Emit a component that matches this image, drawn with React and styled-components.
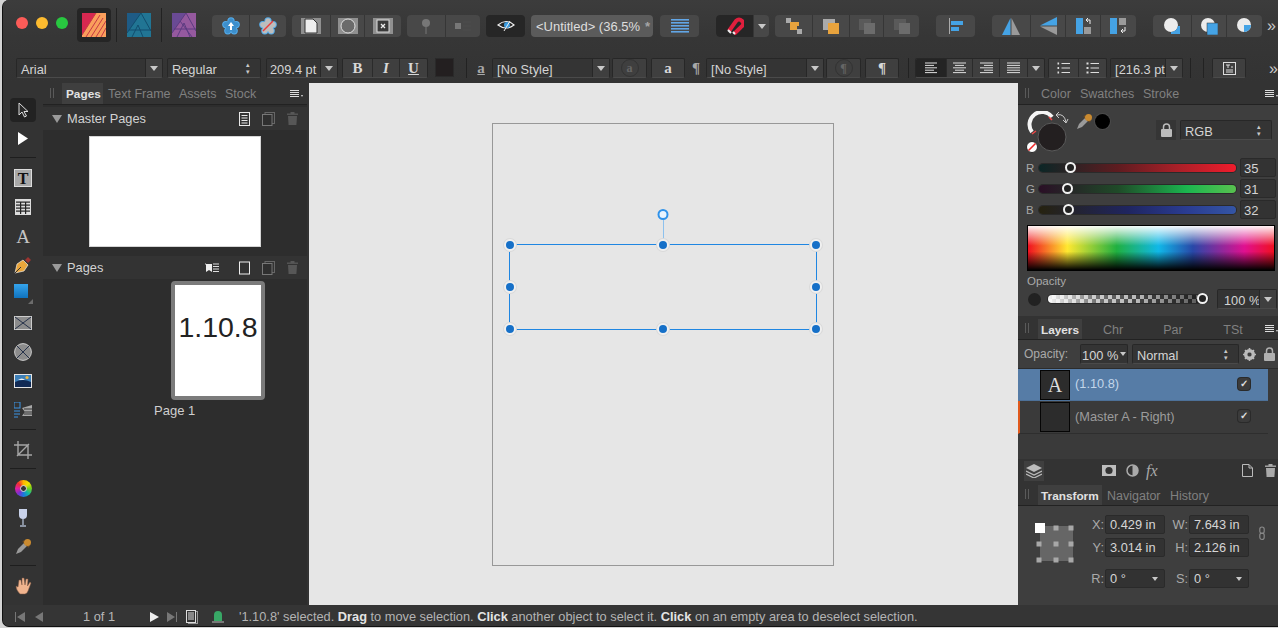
import React from 'react';
import styled, { createGlobalStyle } from 'styled-components';

const GlobalStyle = createGlobalStyle`
  html, body { margin: 0; padding: 0; background: #d4d4d4; overflow: hidden; }
  * { box-sizing: border-box; }
  body { font-family: "Liberation Sans", Arial, sans-serif; }
`;

const Window = styled.div`
  margin-left: 2px;
  width: 1276px;
  height: 627px;
  border-left: 1px solid #111;
  border-bottom: 1px solid #111;
  border-radius: 7px 0 0 7px;
  overflow: hidden;
  display: grid;
  grid-template-columns: 40px 266px 709px 260px;
  grid-template-rows: 83px 522px 21px;
  background: #333;
`;

const Toolbar = styled.div`
  grid-column: 1 / 5;
  background: linear-gradient(#3c3c3c, #363636 45%, #333);
`;

const TopRow = styled.div`
  display: flex;
  align-items: flex-start;
  height: 58px;
  padding-top: 15px;
`;

const FormatRow = styled.div`
  display: flex;
  align-items: flex-start;
  height: 25px;
`;

const Lights = styled.div`
  display: flex;
  gap: 8px;
  margin: 2px 0 0 13px;
`;

const Light = styled.span`
  width: 12px;
  height: 12px;
  border-radius: 50%;
  background: ${p => p.$c};
`;

const AppTile = styled.div`
  width: ${p => p.$active ? 34 : 24}px;
  height: 34px;
  margin: -7px 0 0 ${p => p.$ml}px;
  border-radius: 4px;
  background: ${p => p.$active ? '#252525' : 'transparent'};
  display: flex;
  align-items: center;
  justify-content: center;
`;

const AppSep = styled.span`
  width: 1px;
  height: 34px;
  margin: -7px 0 0 ${p => p.$ml}px;
  background: #222;
`;

const Group = styled.div`
  display: flex;
  height: 22px;
  margin-left: ${p => p.$ml}px;
  border-radius: 4px;
  overflow: hidden;
  background: ${p => p.$bg || '#484848'};
`;

const Seg = styled.div`
  width: ${p => p.$w}px;
  height: 100%;
  display: flex;
  align-items: center;
  justify-content: center;
  background: ${p => p.$bg || 'transparent'};
  & + & { border-left: 1px solid #363636; }
`;

const Title = styled.div`
  width: 122px;
  height: 22px;
  margin-left: 6px;
  padding-left: 5px;
  border-radius: 4px;
  background: #5b5b5b;
  color: #dedede;
  font-size: 13px;
  line-height: 24px;
  white-space: nowrap;
  overflow: hidden;
`;

const Star = styled.span`
  margin-left: 5px;
  color: #a5a5a5;
  font-weight: 700;
`;

const More = styled.span`
  margin-left: ${p => p.$ml}px;
  color: #c8c8c8;
  font-size: 16px;
  line-height: 22px;
`;

const Combo = styled.div`
  display: flex;
  flex: none;
  width: ${p => p.$w}px;
  height: 20px;
  margin-left: ${p => p.$ml}px;
  margin-top: ${p => p.$mt || 0}px;
  background: ${p => p.$bg || '#343434'};
  border: 1px solid #272727;
  border-bottom-color: #4a4a4a;
  border-radius: 2px;
  color: #d4d4d4;
  font-size: 12.8px;
  line-height: 21px;
`;

const ComboText = styled.span`
  flex: 1;
  padding-left: ${p => p.$pl || 4}px;
  white-space: nowrap;
  overflow: hidden;
`;

const ComboArrow = styled.span`
  flex: none;
  width: ${p => p.$w || 17}px;
  display: flex;
  align-items: center;
  justify-content: center;
  border-left: ${p => p.$bare ? 0 : '1px solid #272727'};
  background: ${p => p.$bare ? 'transparent' : '#3f3f3f'};
`;

const Caret = styled.i`
  width: 0;
  height: 0;
  border-left: ${p => p.$s || 4}px solid transparent;
  border-right: ${p => p.$s || 4}px solid transparent;
  border-top: ${p => (p.$s || 4) + 1}px solid #c8c8c8;
`;

const Stepper = styled.span`
  flex: none;
  width: 14px;
  color: #c8c8c8;
  font-size: 7px;
  line-height: 7px;
  padding-top: 2px;
`;

const FmtGroup = styled.div`
  display: flex;
  flex: none;
  height: 20px;
  margin-left: ${p => p.$ml}px;
  background: #3f3f3f;
  border: 1px solid #272727;
  border-bottom-color: #4a4a4a;
  border-radius: 2px;
  overflow: hidden;
`;

const FmtBtn = styled.div`
  width: ${p => p.$w}px;
  display: flex;
  align-items: center;
  justify-content: center;
  background: ${p => p.$on ? '#242424' : 'transparent'};
  color: ${p => p.$dim ? '#666' : '#d8d8d8'};
  font: 700 ${p => p.$fs || 15}px "Liberation Serif", serif;
  font-style: ${p => p.$i ? 'italic' : 'normal'};
  text-decoration: ${p => p.$u ? 'underline' : 'none'};
  & + & { border-left: 1px solid #2b2b2b; }
`;

const DimRing = styled.span`
  width: 18px;
  height: 18px;
  display: flex;
  align-items: center;
  justify-content: center;
  border-radius: 50%;
  border: 1px solid #333;
`;

const Swatch = styled.div`
  width: 34px;
  height: 19px;
  margin-left: ${p => p.$ml}px;
  background: #231f20;
  border: 1px solid #2a2a2a;
`;

const VSep = styled.span`
  flex: none;
  width: 1px;
  height: 20px;
  margin-left: ${p => p.$ml}px;
  background: #222;
`;

const Glyph = styled.span`
  flex: none;
  width: ${p => p.$w}px;
  margin-left: ${p => p.$ml}px;
  color: #a8a8a8;
  font: 700 15px/20px "Liberation Serif", serif;
  text-decoration: ${p => p.$u ? 'underline' : 'none'};
  text-align: center;
`;

const ToolColumn = styled.div`
  background: #333;
  padding-top: 15px;
  display: flex;
  flex-direction: column;
  align-items: center;
`;

const Tool = styled.div`
  width: 26px;
  height: ${p => p.$h || 29}px;
  margin-top: ${p => p.$mt || 0}px;
  display: flex;
  align-items: center;
  justify-content: center;
  border-radius: 4px;
  background: ${p => p.$on ? '#222' : 'transparent'};
`;

const ToolSep = styled.span`
  width: 26px;
  height: 1px;
  margin: ${p => p.$mt || 4}px 0 5px;
  background: #1e1e1e;
`;

const WheelDisc = styled.div`
  width: 17px;
  height: 17px;
  border-radius: 50%;
  background: conic-gradient(#ffb400, #f0e000, #6fd020, #10b8a0, #1c78e0, #7a30d0, #e020a0, #f03030, #ffb400);
  display: flex;
  align-items: center;
  justify-content: center;
`;

const WheelHub = styled.span`
  width: 7px;
  height: 7px;
  border-radius: 50%;
  background: #333;
  border: 1px solid #ddd;
`;

const Studio = styled.div`
  background: #2d2d2d;
  border-right: 2px solid #333;
  display: flex;
  flex-direction: column;
  overflow: hidden;
`;

const TabRow = styled.div`
  flex: none;
  display: flex;
  align-items: flex-end;
  height: ${p => p.$h || 22}px;
  background: #333;
  border-bottom: 1px solid #222;
  position: relative;
`;

const Grip = styled.span`
  width: 4px;
  height: 10px;
  margin: 0 0 6px ${p => p.$ml}px;
  border-left: 1px solid #5a5a5a;
  border-right: 1px solid #5a5a5a;
`;

const Tab = styled.div`
  width: ${p => p.$w}px;
  height: ${p => p.$h || 21}px;
  margin-left: ${p => p.$ml || 0}px;
  padding-left: ${p => p.$pl || 0}px;
  background: ${p => p.$on ? '#3f3f3f' : 'transparent'};
  color: ${p => p.$on ? '#e2e2e2' : '#808080'};
  font-size: ${p => p.$on ? 11.8 : 12.5}px;
  font-weight: ${p => p.$on ? 700 : 400};
  line-height: ${p => (p.$h || 21) + 2}px;
  text-align: ${p => p.$center ? 'center' : 'left'};
  white-space: nowrap;
`;

const TabMenu = styled.div`
  position: absolute;
  right: ${p => p.$r}px;
  bottom: 7px;
  width: 13px;
  height: 7px;
  &::before {
    content: "";
    display: block;
    width: 9px;
    height: 7px;
    background: repeating-linear-gradient(#ddd 0 1px, transparent 1px 2px);
  }
  &::after {
    content: "";
    position: absolute;
    right: 0;
    bottom: 0;
    border-left: 1.5px solid transparent;
    border-right: 1.5px solid transparent;
    border-top: 2px solid #ddd;
  }
`;

const SectionHead = styled.div`
  flex: none;
  display: flex;
  align-items: center;
  height: 23px;
  margin-top: ${p => p.$mt}px;
  background: #333;
  color: #d2d2d2;
  font-size: 12.8px;
`;

const Disclosure = styled.i`
  margin: 0 5px 0 9px;
  border-left: 5px solid transparent;
  border-right: 5px solid transparent;
  border-top: 8px solid #9a9a9a;
`;

const HeadIcons = styled.div`
  margin-left: auto;
  display: flex;
  align-items: center;
  gap: 12px;
  padding-right: 9px;
`;

const MasterThumb = styled.div`
  flex: none;
  width: 172px;
  height: 111px;
  margin: 6px 0 0 46px;
  background: #fff;
  border: 1px solid #d5d5d5;
`;

const PageThumb = styled.div`
  flex: none;
  width: 94px;
  height: 119px;
  margin: 2px 0 0 128px;
  padding-top: 25px;
  background: #fff;
  border: 4px solid #7b7b7b;
  border-radius: 4px;
  color: #222;
  font-size: 28.5px;
  line-height: 34px;
  text-align: center;
`;

const PageLabel = styled.div`
  margin: 3px 0 0 111px;
  color: #cfcfcf;
  font-size: 13px;
  line-height: 16px;
`;

const Canvas = styled.div`
  background: #e6e6e6;
  display: flex;
  justify-content: center;
  padding: 40px 1px 0 0;
`;

const Sheet = styled.div`
  width: 342px;
  height: 443px;
  border: 1px solid #989898;
  position: relative;
`;

const Selection = styled.div`
  position: absolute;
  left: 16px;
  top: 120px;
  width: 308px;
  height: 86px;
  border: 1px solid #1f86e2;
`;

const Stem = styled.span`
  position: absolute;
  left: 153px;
  top: -30px;
  width: 1px;
  height: 30px;
  background: #8dc1ee;
`;

const Handle = styled.span`
  position: absolute;
  left: ${p => p.$x}%;
  top: ${p => p.$y}%;
  width: 12px;
  height: 12px;
  transform: translate(-50%, -50%);
  border-radius: 50%;
  background: #1670c8;
  border: 2px solid #f0f0f0;
  box-shadow: 0 0 0 1px #dadada;
`;

const RotateHandle = styled.span`
  position: absolute;
  left: 50%;
  top: -36px;
  width: 11px;
  height: 11px;
  transform: translateX(-50%);
  border-radius: 50%;
  background: #e8f4ff;
  border: 2px solid #2f92ea;
`;

const Inspector = styled.div`
  background: #3e3e3e;
  display: flex;
  flex-direction: column;
  overflow: hidden;
`;

const ColorBody = styled.div`
  flex: none;
  height: 211px;
  padding-top: 6px;
`;

const ColorTop = styled.div`
  display: flex;
  align-items: flex-start;
  height: 47px;
  padding-left: 8px;
`;

const DropperSlot = styled.span`
  display: flex;
  margin-top: 2px;
`;

const BlackDot = styled.span`
  width: 15px;
  height: 15px;
  margin: 3px 0 0 2px;
  border-radius: 50%;
  background: #000;
  box-shadow: 0 0 0 1px #4a4a4a;
`;

const LockBox = styled.div`
  width: 20px;
  height: 20px;
  margin: 9px 0 0 46px;
  background: #353535;
  display: flex;
  align-items: center;
  justify-content: center;
`;

const SliderRow = styled.div`
  display: flex;
  align-items: center;
  height: 19px;
  margin-bottom: 2px;
  padding-left: 8px;
`;

const SliderLabel = styled.span`
  width: 13px;
  color: #a8a8a8;
  font-size: 11.5px;
`;

const Track = styled.div`
  width: ${p => p.$w || 197}px;
  height: 8px;
  margin-left: ${p => p.$ml || 0}px;
  border-radius: 4px;
  background: ${p => p.$bg};
  box-shadow: 0 0 0 1px #2a2a2a;
  position: relative;
`;

const Thumb = styled.span`
  position: absolute;
  left: ${p => p.$x}px;
  top: -2px;
  width: 11px;
  height: 11px;
  margin-left: -5px;
  border-radius: 50%;
  background: #222;
  border: 2px solid #f2f2f2;
`;

const ValueBox = styled.div`
  width: 36px;
  height: 19px;
  margin-left: 4px;
  padding-left: 3px;
  background: #333;
  border: 1px solid #2a2a2a;
  border-radius: 2px;
  color: #d4d4d4;
  font-size: 13px;
  line-height: 20px;
`;

const Spectrum = styled.div`
  width: 248px;
  height: 46px;
  margin: 6px 0 0 9px;
  border: 1px solid #000;
  background:
    linear-gradient(rgba(255,255,255,.95), rgba(255,255,255,0) 45%, rgba(0,0,0,0) 58%, #000),
    linear-gradient(90deg, #f01020, #ffe830 16%, #20b040 36%, #10b8e8 53%, #2848a8 67%, #e01090 88%, #f01020);
`;

const OpacityLabel = styled.div`
  margin: 4px 0 0 9px;
  color: #aaa;
  font-size: 11.5px;
  line-height: 13px;
`;

const OpacityRow = styled.div`
  display: flex;
  align-items: center;
  height: 20px;
  margin-top: 1px;
  padding-left: 10px;
`;

const Dot = styled.span`
  width: 13px;
  height: 13px;
  border-radius: 50%;
  background: #222;
`;

const LayerBar = styled.div`
  flex: none;
  display: flex;
  align-items: center;
  height: 29px;
  padding-left: 6px;
  border-bottom: 1px solid #2c2c2c;
  color: #aaa;
  font-size: 12px;
`;

const LayerList = styled.div`
  flex: none;
  height: 90px;
  background: #3a3a3a;
`;

const LayerRow = styled.div`
  display: flex;
  align-items: center;
  width: 250px;
  height: ${p => p.$h}px;
  padding-bottom: 2px;
  border-bottom: 1px solid ${p => p.$on ? '#4d7199' : '#2e2e2e'};
  border-left: 2px solid ${p => p.$mark ? '#e0591c' : 'transparent'};
  background: ${p => p.$on ? '#567ca6' : '#3a3a3a'};
  color: ${p => p.$on ? '#c3d6ea' : '#9c9c9c'};
  font-size: 12.8px;
`;

const LayerThumb = styled.div`
  width: 30px;
  height: 30px;
  margin: 2px 5px 0 20px;
  background: #2c2c2c;
  border: 1px solid #050505;
  color: #ddd;
  font: 20px/28px "Liberation Serif", serif;
  text-align: center;
`;

const LayerCheck = styled.span`
  width: 12px;
  height: 12px;
  margin: 0 18px 0 auto;
  background: #3b3b3b;
  border-radius: 3px;
  color: #ddd;
  font-size: 10px;
  font-weight: 700;
  line-height: 12px;
  text-align: center;
  box-shadow: 0 0 0 1px #2a2a2a;
`;

const LayerFoot = styled.div`
  flex: none;
  display: flex;
  align-items: center;
  height: 23px;
  background: #333;
`;

const LayersBtn = styled.div`
  width: 20px;
  height: 20px;
  margin-left: 6px;
  background: #3f3f3f;
  display: flex;
  align-items: center;
  justify-content: center;
`;

const FootSlot = styled.span`
  margin-left: ${p => p.$ml}px;
  display: flex;
  color: #aaa;
  font: italic 16px/16px "Liberation Serif", serif;
`;

const TransformBody = styled.div`
  flex: none;
  height: 99px;
  display: flex;
  align-items: flex-start;
`;

const AnchorIcon = styled.div`
  margin: 17px 0 0 17px;
`;

const FieldsWrap = styled.div`
  margin: 9px 0 0 13px;
`;

const Fields = styled.div`
  display: grid;
  grid-template-columns: 16px 60px 24px 60px;
  grid-auto-rows: 19px;
  row-gap: 4px;
  margin-bottom: 12px;
  align-items: center;
`;

const FieldLabel = styled.span`
  color: #aaa;
  font-size: 12.8px;
  text-align: right;
  padding-right: 1px;
`;

const Field = styled.div`
  height: 19px;
  padding-left: 4px;
  display: flex;
  align-items: center;
  justify-content: space-between;
  background: #323232;
  border-radius: 2px;
  border: 1px solid #2a2a2a;
  color: #d6d6d6;
  font-size: 12.8px;
`;

const FieldCaret = styled(Caret)`
  margin-right: 6px;
`;

const StatusBar = styled.div`
  grid-column: 1 / 5;
  display: flex;
  align-items: center;
  padding-top: 2px;
  background: #353535;
  color: #b4b4b4;
  font-size: 12.8px;
`;

const Slot = styled.span`
  display: flex;
  margin-left: ${p => p.$ml}px;
`;

const PageCount = styled.span`
  margin-left: 40px;
  width: 30px;
  color: #b8b8b8;
  white-space: nowrap;
`;

const Hint = styled.span`
  margin-left: 15px;
  white-space: nowrap;
  & b { color: #e4e4e4; }
`;

/* icons */
const Ico = ({ w = 16, h = 16, children }) => (
  <svg width={w} height={h} viewBox={`0 0 ${w} ${h}`} style={{ display: 'block' }}>{children}</svg>
);

const Publisher = () => (
  <Ico w={24} h={24}>
    <rect width="24" height="24" fill="#fa9f5c" />
    <path d="M0 0H14L0 22Z" fill="#d62850" />
    <path d="M0 22L14 0M4 24L18 2M9 24L21 5M14 24L24 8M19 24L24 15" stroke="#c63a45" strokeWidth="1" fill="none" />
  </Ico>
);

const Designer = () => (
  <Ico w={24} h={24}>
    <rect width="24" height="24" fill="#217594" />
    <path d="M0 0H14L0 20Z" fill="#1e5b85" />
    <path d="M0 20L14 0L24 18M5 24L11 12L16 24M2 17H24" stroke="#124d6e" strokeWidth="1" fill="none" />
  </Ico>
);

const Photo = () => (
  <Ico w={24} h={24}>
    <rect width="24" height="24" fill="#95599e" />
    <path d="M0 0H14L0 20Z" fill="#6a4a94" />
    <path d="M0 20L14 0L24 18M5 24L12 10L18 24M2 16H24M8 8L20 24" stroke="#5c3b80" strokeWidth="1" fill="none" />
  </Ico>
);

const petals = [[9, 3.8], [14.2, 7.6], [12.2, 13.8], [5.8, 13.8], [3.8, 7.6]];
const Flower = ({ fill, children }) => (
  <Ico w={18} h={18}>
    {petals.map(([x, y]) => <circle key={x + y} cx={x} cy={y} r="3.6" fill="#55adec" />)}
    {petals.map(([x, y]) => <circle key={x + y} cx={x} cy={y} r="2.6" fill={fill} />)}
    <circle cx="9" cy="9" r="5.6" fill={fill} />
    {children}
  </Ico>
);

const Stripes = ({ children }) => (
  <Ico w={20} h={16}>
    {[0, 2, 4, 6, 8, 10, 12, 14].map(y => <rect key={y} y={y + 0.5} width="20" height="1" fill="#d8d8d8" />)}
    {children}
  </Ico>
);

const Overlap = ({ back, front, dim }) => (
  <Ico w={18} h={16}>
    <rect x="1" y="1" width="12" height="11" fill={back} opacity={dim ? 0.55 : 1} />
    <rect x="6" y="5" width="11" height="11" fill={front} opacity={dim ? 0.55 : 1} />
  </Ico>
);

const Boolean = ({ children }) => (
  <Ico w={18} h={18}>
    <circle cx="8" cy="8" r="7" fill="#ececec" />
    {children}
  </Ico>
);

const Lines = ({ rows, color = '#ddd' }) => (
  <Ico w={13} h={12}>
    {rows.map(([x, w], i) => <rect key={i} x={x} y={i * 2.4 + 0.5} width={w} height="1" fill={color} />)}
  </Ico>
);

const Bullets = ({ nums }) => (
  <Ico w={13} h={12}>
    {[1.5, 6, 10.5].map(y => (
      <g key={y}>
        <rect x="0.5" y={y - 1} width={nums ? 2 : 1.6} height="2" fill="#ddd" />
        <rect x="4.5" y={y - 0.5} width="8.5" height="1" fill="#ddd" />
      </g>
    ))}
  </Ico>
);

const Dropper = () => (
  <Ico w={17} h={17}>
    <path d="M1 16L3 11L9 5L12 8L6 14Z" fill="#9a9a9a" />
    <path d="M8 3L14 9" stroke="#6a4a24" strokeWidth="2" />
    <circle cx="12.5" cy="4.5" r="3.5" fill="#c98a30" />
  </Ico>
);

const Trash = ({ color = '#575757' }) => (
  <Ico w={11} h={13}>
    <rect y="1.5" width="11" height="1.4" fill={color} />
    <rect x="3.5" width="4" height="2" fill={color} />
    <path d="M1 4H10L9.4 13H1.6Z" fill={color} />
  </Ico>
);

const DocLines = () => (
  <Ico w={11} h={14}>
    <rect x="0.5" y="0.5" width="10" height="13" fill="none" stroke="#e8e8e8" />
    {[3, 5.5, 8, 10.5].map(y => <rect key={y} x="2.5" y={y} width="6" height="1" fill="#e8e8e8" />)}
  </Ico>
);

const DocsDim = () => (
  <Ico w={13} h={14}>
    <rect x="3" y="0.5" width="9.5" height="11" fill="none" stroke="#666" />
    <rect x="0.5" y="2.5" width="9.5" height="11" fill="#2f2f2f" stroke="#777" />
  </Ico>
);

const Lock = ({ c = '#bbb' }) => (
  <Ico w={11} h={14}>
    <path d="M2.5 6V4A3 3 0 0 1 8.5 4V6" fill="none" stroke={c} strokeWidth="1.5" />
    <rect y="6" width="11" height="8" rx="1" fill={c} />
  </Ico>
);

const ColorChip = () => (
  <Ico w={50} h={46}>
    <path d="M6 21A12 12 0 0 1 26 6" fill="none" stroke="#f5f5f5" strokeWidth="4" />
    <path d="M6 23l4-3M23 6l3 3" stroke="#f04848" strokeWidth="1.5" />
    <circle cx="26" cy="26" r="14" fill="#231f20" stroke="#5a5a5a" />
    <path d="M31 4Q38 2 40 11M33 1l-3 3 3 3M37 9l3 3 2-4" fill="none" stroke="#ccc" strokeWidth="1" />
    <circle cx="6" cy="36" r="5.5" fill="#fff" stroke="#2a2a2a" />
    <path d="M2.5 39.5L9.5 32.5" stroke="#ee2a2a" strokeWidth="1.6" />
  </Ico>
);

const Anchor = () => (
  <Ico w={41} h={40}>
    <rect x="5" y="3" width="33" height="35" fill="#666" />
    {[[21, 5], [36, 5], [4, 21], [21, 21], [36, 21], [4, 37], [21, 37], [36, 37]].map(([x, y]) => (
      <rect key={x * 50 + y} x={x - 2.5} y={y - 2.5} width="5" height="5" fill="#a8a8a8" />
    ))}
    <rect x="0" y="0" width="10" height="10" fill="#fff" />
  </Ico>
);

const Tri = ({ d, c = '#808080', w = 10, h = 12 }) => <Ico w={w} h={h}><path d={d} fill={c} /></Ico>;

const SplitField = ({ children, w, ml, pl, bg = '#343434' }) => (
  <Combo $w={w} $ml={ml} $bg={bg}>
    <ComboText $pl={pl}>{children}</ComboText>
    <ComboArrow><Caret /></ComboArrow>
  </Combo>
);

const handles = [[0, 0], [50, 0], [100, 0], [0, 50], [100, 50], [0, 100], [50, 100], [100, 100]];

export default function App() {
  return (
    <>
      <GlobalStyle />
      <Window>
        <Toolbar>
          <TopRow>
            <Lights>
              <Light $c="#fc5c58" /><Light $c="#fdbb2f" /><Light $c="#28c840" />
            </Lights>
            <AppTile $active $ml={9}><Publisher /></AppTile>
            <AppSep $ml={5} />
            <AppTile $ml={10}><Designer /></AppTile>
            <AppSep $ml={10} />
            <AppTile $ml={10}><Photo /></AppTile>

            <Group $ml={16}>
              <Seg $w={37}><Flower fill="#3d8fcc"><path d="M9 5L12 9H10V13H8V9H6Z" fill="#fff" /></Flower></Seg>
              <Seg $w={37}><Flower fill="#bdbdbd"><path d="M4 14L14 4" stroke="#ea3c3c" strokeWidth="1.4" /></Flower></Seg>
            </Group>
            <Group $ml={6}>
              <Seg $w={38}><Stripes><path d="M4 1H12L16 5V15H4Z" fill="#eee" stroke="#333" /></Stripes></Seg>
              <Seg $w={34}><Stripes><circle cx="10" cy="8" r="7" fill="#6b6b6b" stroke="#ddd" /></Stripes></Seg>
              <Seg $w={37}><Stripes><rect x="4" y="2" width="12" height="12" fill="#3a3a3a" stroke="#ddd" /><path d="M8 6L12 10M12 6L8 10" stroke="#eee" strokeWidth="1.3" /></Stripes></Seg>
            </Group>
            <Group $ml={6}>
              <Seg $w={38}><Ico w={10} h={16}><circle cx="5" cy="5" r="4" fill="#777" /><rect x="4.5" y="8" width="1" height="8" fill="#777" /></Ico></Seg>
              <Seg $w={35}><Ico w={16} h={12}><rect x="0" y="3" width="6" height="6" fill="#777" /><path d="M8 2H16M8 6H16M8 10H16" stroke="#4c4c4c" /></Ico></Seg>
            </Group>
            <Group $ml={6} $bg="#262626">
              <Seg $w={39}>
                <Ico w={18} h={12}>
                  <path d="M1 5Q9 -2 17 5Q9 11 1 5Z" fill="none" stroke="#eee" strokeWidth="1.2" />
                  <circle cx="10" cy="5" r="3" fill="#3a9be0" />
                  <path d="M7 11L13 1" stroke="#eee" />
                </Ico>
              </Seg>
            </Group>
            <Title>&lt;Untitled&gt; (36.5%<Star>*</Star></Title>
            <Group $ml={7}>
              <Seg $w={39}>
                <Ico w={18} h={16}>
                  {[1, 4, 7, 10, 13].map(y => <rect key={y} y={y} width="18" height="1.6" fill="#62a6e6" />)}
                </Ico>
              </Seg>
            </Group>
            <Group $ml={17}>
              <Seg $w={37} $bg="#262626">
                <Ico w={18} h={18}>
                  <path d="M3 14L10 4Q13 1 16 4T15 10L8 17" fill="none" stroke="#e01f3d" strokeWidth="4" />
                  <path d="M2 13L5 16M7 15L9 17" stroke="#eee" strokeWidth="2" />
                </Ico>
              </Seg>
              <Seg $w={16}><Caret /></Seg>
            </Group>
            <Group $ml={6}>
              <Seg $w={37}>
                <Ico w={16} h={16}>
                  <rect x="0" y="0" width="5" height="5" fill="#aaa" /><rect x="11" y="11" width="5" height="5" fill="#aaa" />
                  <rect x="4" y="4" width="4" height="4" fill="#e8a33d" /><rect x="8" y="4" width="5" height="4" fill="#e8a33d" /><rect x="4" y="8" width="7" height="4" fill="#e8a33d" />
                </Ico>
              </Seg>
              <Seg $w={37}><Overlap back="#aaa" front="#e8a33d" /></Seg>
              <Seg $w={34}><Overlap back="#5a5a5a" front="#6c6c6c" /></Seg>
              <Seg $w={36}><Overlap back="#5a5a5a" front="#6c6c6c" /></Seg>
            </Group>
            <Group $ml={17}>
              <Seg $w={39}>
                <Ico w={14} h={16}>
                  <rect x="0" y="0" width="1" height="16" fill="#aaa" />
                  <rect x="2" y="3" width="12" height="4" fill="#45a3e5" />
                  <rect x="2" y="9" width="8" height="4" fill="#45a3e5" />
                </Ico>
              </Seg>
            </Group>
            <Group $ml={17}>
              <Seg $w={38}><Ico w={18} h={17}><path d="M8.5 0V17H0Z" fill="#45a3e5" /><path d="M9.5 0V17H18Z" fill="#9a9a9a" /></Ico></Seg>
              <Seg $w={35}><Ico w={17} h={18}><path d="M17 0V8.5H0Z" fill="#45a3e5" /><path d="M17 18V9.5H0Z" fill="#9a9a9a" /></Ico></Seg>
              <Seg $w={35}>
                <Ico w={15} h={16}>
                  <rect x="0" y="0" width="7" height="16" fill="#45a3e5" />
                  <rect x="8" y="9" width="7" height="7" fill="#9a9a9a" />
                  <path d="M14 6V2H10M10 2L12 0M10 2L12 4" fill="none" stroke="#eee" />
                </Ico>
              </Seg>
              <Seg $w={36}>
                <Ico w={17} h={16}>
                  <rect x="0" y="0" width="7" height="16" fill="#45a3e5" />
                  <rect x="9" y="0" width="7" height="7" fill="#9a9a9a" />
                  <path d="M15 9V13H11M11 13L13 11M11 13L13 15" fill="none" stroke="#eee" />
                </Ico>
              </Seg>
            </Group>
            <Group $ml={17}>
              <Seg $w={38}><Boolean><path d="M17 9V17H8V15A7 7 0 0 0 15 9Z" fill="#45a3e5" /></Boolean></Seg>
              <Seg $w={35}><Boolean><rect x="7" y="6" width="11" height="12" fill="#45a3e5" stroke="#333" strokeWidth=".5" /></Boolean></Seg>
              <Seg $w={36}><Boolean><path d="M8 8H15A7 7 0 0 1 8 15Z" fill="#45a3e5" /></Boolean></Seg>
            </Group>
            <More $ml={5}>»</More>
          </TopRow>

          <FormatRow>
            <SplitField w={147} ml={13}>Arial</SplitField>
            <Combo $w={94} $ml={4}>
              <ComboText>Regular</ComboText>
              <Stepper>▴<br />▾</Stepper>
            </Combo>
            <SplitField w={72} ml={5} pl={3}>209.4 pt</SplitField>
            <FmtGroup $ml={4}>
              <FmtBtn $w={29}>B</FmtBtn>
              <FmtBtn $w={27} $i>I</FmtBtn>
              <FmtBtn $w={28} $u>U</FmtBtn>
            </FmtGroup>
            <Swatch $ml={7} />
            <VSep $ml={12} />
            <Glyph $w={10} $ml={9} $u>a</Glyph>
            <SplitField w={118} ml={6}>[No Style]</SplitField>
            <FmtGroup $ml={2}><FmtBtn $w={33} $dim $fs={12}><DimRing>a</DimRing></FmtBtn></FmtGroup>
            <FmtGroup $ml={4}><FmtBtn $w={32}>a</FmtBtn></FmtGroup>
            <Glyph $w={10} $ml={6}>¶</Glyph>
            <SplitField w={118} ml={5}>[No Style]</SplitField>
            <FmtGroup $ml={2}><FmtBtn $w={33} $dim $fs={12}><DimRing>¶</DimRing></FmtBtn></FmtGroup>
            <FmtGroup $ml={4}><FmtBtn $w={32}>¶</FmtBtn></FmtGroup>
            <VSep $ml={9} />
            <FmtGroup $ml={6}>
              <FmtBtn $w={30} $on><Lines rows={[[0, 12], [0, 9], [0, 12], [0, 9], [0, 12]]} /></FmtBtn>
              <FmtBtn $w={26}><Lines rows={[[0, 13], [2, 9], [0, 13], [2, 9], [0, 13]]} /></FmtBtn>
              <FmtBtn $w={27}><Lines rows={[[0, 13], [4, 9], [0, 13], [4, 9], [0, 13]]} /></FmtBtn>
              <FmtBtn $w={28}><Lines rows={[[0, 13], [0, 13], [0, 13], [0, 13], [0, 13]]} /></FmtBtn>
              <FmtBtn $w={17}><Caret /></FmtBtn>
            </FmtGroup>
            <FmtGroup $ml={3}>
              <FmtBtn $w={29}><Bullets /></FmtBtn>
              <FmtBtn $w={28}><Bullets nums /></FmtBtn>
            </FmtGroup>
            <SplitField w={73} ml={3}>[216.3 pt</SplitField>
            <VSep $ml={7} />
            <VSep $ml={12} />
            <FmtGroup $ml={8}>
              <FmtBtn $w={32}>
                <Ico w={13} h={13}>
                  <rect x=".5" y=".5" width="12" height="12" fill="none" stroke="#ddd" />
                  <path d="M3 3H7M5 3V6M8 5H10M3 8H10M3 10H10" stroke="#ddd" />
                </Ico>
              </FmtBtn>
            </FmtGroup>
            <More $ml={23}>»</More>
          </FormatRow>
        </Toolbar>

        <ToolColumn>
          <Tool $h={24} $on>
            <Ico w={11} h={16}><path d="M1 1V13L4 10L6.5 15L8.5 14L6 9.5H10Z" fill="#2a2a2a" stroke="#ddd" /></Ico>
          </Tool>
          <Tool $mt={2}>
            <Ico w={10} h={13}><path d="M0 0L10 6.5L0 13Z" fill="#fff" /></Ico>
          </Tool>
          <ToolSep />
          <Tool>
            <Ico w={18} h={18}>
              <rect x=".5" y=".5" width="17" height="17" fill="#a8a8a8" stroke="#ddd" />
              <text x="9" y="15" textAnchor="middle" fontFamily="Liberation Serif" fontWeight="700" fontSize="16" fill="#111">T</text>
            </Ico>
          </Tool>
          <Tool>
            <Ico w={16} h={16}>
              <rect width="16" height="16" fill="#ddd" />
              {[2.5, 5.5, 8.5, 11.5].map(y => <rect key={y} x="1" y={y} width="14" height="1.2" fill="#222" />)}
              {[5, 10].map(x => <rect key={x} x={x} y="3" width="1.2" height="12" fill="#222" />)}
            </Ico>
          </Tool>
          <Tool>
            <Ico w={20} h={20}>
              <text x="10" y="17" textAnchor="middle" fontFamily="Liberation Serif" fontSize="19" fill="#c4c4c4">A</text>
            </Ico>
          </Tool>
          <Tool>
            <Ico w={18} h={18}>
              <path d="M1 17L3 8L9 4L14 9L10 15Z" fill="#eaa53b" stroke="#fff" strokeWidth=".6" />
              <path d="M1 17L7 11" stroke="#333" />
              <path d="M11 4L14 1L17 4L14 7Z" fill="#9c3430" />
            </Ico>
          </Tool>
          <Tool>
            <Ico w={22} h={22}>
              <defs><linearGradient id="rectFill" x1="0" y1="0" x2="0" y2="1"><stop offset="0" stopColor="#35a4ec" /><stop offset="1" stopColor="#0f72bd" /></linearGradient></defs>
              <rect x="2" y="1" width="14" height="14" fill="url(#rectFill)" />
              <path d="M21 16V21H16Z" fill="#6c6c6c" />
            </Ico>
          </Tool>
          <Tool>
            <Ico w={18} h={14}>
              <rect x=".5" y=".5" width="17" height="13" fill="#8c8c8c" stroke="#ccc" />
              <path d="M1 1L17 13M17 1L1 13" stroke="#26324a" />
            </Ico>
          </Tool>
          <Tool>
            <Ico w={18} h={18}>
              <circle cx="9" cy="9" r="8.4" fill="#8c8c8c" stroke="#ccc" />
              <path d="M3 3L15 15M15 3L3 15" stroke="#26324a" />
            </Ico>
          </Tool>
          <Tool>
            <Ico w={18} h={14}>
              <rect width="18" height="14" fill="#e5e5e5" />
              <rect x="1" y="1" width="16" height="12" fill="#3e80b8" />
              <circle cx="13" cy="3.5" r="1.6" fill="#f0b840" />
              <path d="M1 8Q9 4 17 8V13H1Z" fill="#112a55" />
              <path d="M4 6Q8 3 11 6Z" fill="#eee" />
            </Ico>
          </Tool>
          <Tool>
            <Ico w={18} h={16}>
              <rect x="0" y="0" width="6" height="6" fill="none" stroke="#3d95e5" />
              <path d="M0 9H6M0 12H6M0 15H4" stroke="#3d95e5" />
              <path d="M8 6L18 3V14H8L11 10Z" fill="#a8a8a8" />
              <path d="M10 7H18M11 10H18M10 12H18" stroke="#333" />
            </Ico>
          </Tool>
          <ToolSep $mt={5} />
          <Tool>
            <Ico w={18} h={18}>
              <path d="M4 0V14H18M0 4H14V18M3 15L15 3" fill="none" stroke="#a5a5a5" strokeWidth="1.4" />
            </Ico>
          </Tool>
          <ToolSep />
          <Tool>
            <WheelDisc><WheelHub /></WheelDisc>
          </Tool>
          <Tool>
            <Ico w={10} h={18}>
              <path d="M1 0H9V6Q9 10 5 10Q1 10 1 6Z" fill="#c9d2ea" />
              <path d="M5 10V16M2 17H8" stroke="#a9b5c9" strokeWidth="1.4" />
            </Ico>
          </Tool>
          <Tool><Dropper /></Tool>
          <ToolSep />
          <Tool>
            <Ico w={17} h={18}>
              <path d="M5 17Q1 13 1 9L3 10L4 3H6L7 8V1H9L10 8L11 2H13L12.5 9L15 5L16 6L13 14Q12 17 10 17Z" fill="#f1b48e" stroke="#7c5642" strokeWidth=".5" />
            </Ico>
          </Tool>
        </ToolColumn>

        <Studio>
          <TabRow>
            <Grip $ml={7} />
            <Tab $on $w={41} $ml={8} $pl={4}>Pages</Tab>
            <Tab $w={71} $ml={1} $pl={4}>Text Frame</Tab>
            <Tab $w={46} $pl={4}>Assets</Tab>
            <Tab $w={40} $pl={4}>Stock</Tab>
            <TabMenu $r={4} />
          </TabRow>
          <SectionHead $mt={2}>
            <Disclosure />Master Pages
            <HeadIcons>
              <DocLines /><DocsDim /><Trash />
            </HeadIcons>
          </SectionHead>
          <MasterThumb />
          <SectionHead $mt={9}>
            <Disclosure />Pages
            <HeadIcons>
              <Ico w={17} h={10}>
                <path d="M1 1H7V9L4 7L1 9Z" fill="#eee" />
                <path d="M8 1H14M8 3.5H14M8 6H14M8 8.5H14M0 1H1" stroke="#ddd" />
              </Ico>
              <Ico w={16} h={14}><rect x="5.5" y="1" width="10" height="12" fill="none" stroke="#eee" /></Ico>
              <DocsDim /><Trash />
            </HeadIcons>
          </SectionHead>
          <PageThumb>1.10.8</PageThumb>
          <PageLabel>Page 1</PageLabel>
        </Studio>

        <Canvas>
          <Sheet>
            <Selection>
              <Stem />
              <RotateHandle />
              {handles.map(([x, y]) => <Handle key={`${x}-${y}`} $x={x} $y={y} />)}
            </Selection>
          </Sheet>
        </Canvas>

        <Inspector>
          <TabRow>
            <Grip $ml={7} />
            <Tab $w={39} $ml={12}>Color</Tab>
            <Tab $w={63}>Swatches</Tab>
            <Tab $w={60}>Stroke</Tab>
            <TabMenu $r={0} />
          </TabRow>
          <ColorBody>
            <ColorTop>
              <ColorChip />
              <DropperSlot><Dropper /></DropperSlot>
              <BlackDot />
              <LockBox><Lock /></LockBox>
              <Combo $w={92} $ml={4} $mt={9}>
                <ComboText>RGB</ComboText>
                <Stepper>▴<br />▾</Stepper>
              </Combo>
            </ColorTop>
            <SliderRow>
              <SliderLabel>R</SliderLabel>
              <Track $bg="linear-gradient(90deg, #0b2626, #5e1c20 40%, #a82028 70%, #f01c2c)"><Thumb $x={31} /></Track>
              <ValueBox>35</ValueBox>
            </SliderRow>
            <SliderRow>
              <SliderLabel>G</SliderLabel>
              <Track $bg="linear-gradient(90deg, #2a0f26, #1f4a28 40%, #1bb64f 75%, #58c14f)"><Thumb $x={28} /></Track>
              <ValueBox>31</ValueBox>
            </SliderRow>
            <SliderRow>
              <SliderLabel>B</SliderLabel>
              <Track $bg="linear-gradient(90deg, #26220f, #1f2560 45%, #2a3c92 75%, #3455a4)"><Thumb $x={29} /></Track>
              <ValueBox>32</ValueBox>
            </SliderRow>
            <Spectrum />
            <OpacityLabel>Opacity</OpacityLabel>
            <OpacityRow>
              <Dot />
              <Track $w={160} $ml={7} $bg="linear-gradient(90deg, rgba(255,255,255,.95), rgba(255,255,255,.25) 30%, rgba(0,0,0,0) 55%, rgba(0,0,0,.6)), repeating-conic-gradient(#bbb 0 25%, #444 0 50%) 0 0 / 8px 8px">
                <Thumb $x={154} />
              </Track>
              <SplitField w={60} ml={9} pl={6}>100 %</SplitField>
            </OpacityRow>
          </ColorBody>

          <TabRow $h={24}>
            <Grip $ml={7} />
            <Tab $on $w={44} $h={20} $ml={9} $center>Layers</Tab>
            <Tab $w={62} $h={20} $center>Chr</Tab>
            <Tab $w={58} $h={20} $center>Par</Tab>
            <Tab $w={62} $h={20} $center>TSt</Tab>
            <TabMenu $r={0} />
          </TabRow>
          <LayerBar>
            Opacity:
            <Combo $w={48} $ml={12}>
              <ComboText $pl={1}>100 %</ComboText>
              <ComboArrow $w={8} $bare><Caret $s={3} /></ComboArrow>
            </Combo>
            <Combo $w={107} $ml={4}>
              <ComboText>Normal</ComboText>
              <Stepper>▴<br />▾</Stepper>
            </Combo>
            <Slot $ml={4}>
              <Ico w={13} h={13}>
                <circle cx="6.5" cy="6.5" r="4" fill="none" stroke="#bbb" strokeWidth="3" />
                <path d="M6.5 0V13M0 6.5H13M2 2L11 11M11 2L2 11" stroke="#bbb" strokeWidth="1.6" />
                <circle cx="6.5" cy="6.5" r="2" fill="#3e3e3e" />
              </Ico>
            </Slot>
            <Slot $ml={8}><Lock c="#b0b0b0" /></Slot>
          </LayerBar>
          <LayerList>
            <LayerRow $on $h={32}>
              <LayerThumb>A</LayerThumb>(1.10.8)
              <LayerCheck>✓</LayerCheck>
            </LayerRow>
            <LayerRow $mark $h={33}>
              <LayerThumb />(Master A - Right)
              <LayerCheck>✓</LayerCheck>
            </LayerRow>
          </LayerList>
          <LayerFoot>
            <LayersBtn>
              <Ico w={16} h={14}>
                <path d="M8 0L16 4L8 8L0 4Z" fill="#bbb" />
                <path d="M0 7L8 11L16 7M0 10L8 14L16 10" fill="none" stroke="#bbb" strokeWidth="1.3" />
              </Ico>
            </LayersBtn>
            <FootSlot $ml={58}>
              <Ico w={14} h={11}><rect width="14" height="11" fill="#bdbdbd" /><circle cx="7" cy="5.5" r="3.6" fill="#333" /></Ico>
            </FootSlot>
            <FootSlot $ml={10}>
              <Ico w={13} h={13}><circle cx="6.5" cy="6.5" r="5.5" fill="none" stroke="#aaa" strokeWidth="1.5" /><path d="M6.5 1A5.5 5.5 0 0 1 6.5 12Z" fill="#aaa" /></Ico>
            </FootSlot>
            <FootSlot $ml={7}>fx</FootSlot>
            <FootSlot $ml={84}>
              <Ico w={11} h={13}><path d="M.5.5H7L10.5 4V12.5H.5ZM7 .5V4H10.5" fill="none" stroke="#bbb" /></Ico>
            </FootSlot>
            <FootSlot $ml={12}><Trash color="#aaa" /></FootSlot>
          </LayerFoot>
          <TabRow $h={24}>
            <Grip $ml={7} />
            <Tab $on $w={64} $h={20} $ml={9} $pl={3}>Transform</Tab>
            <Tab $w={63} $h={20} $pl={5}>Navigator</Tab>
            <Tab $w={50} $h={20} $pl={5}>History</Tab>
          </TabRow>
          <TransformBody>
            <AnchorIcon><Anchor /></AnchorIcon>
            <FieldsWrap>
              <Fields>
                <FieldLabel>X:</FieldLabel><Field>0.429 in</Field>
                <FieldLabel>W:</FieldLabel><Field>7.643 in</Field>
                <FieldLabel>Y:</FieldLabel><Field>3.014 in</Field>
                <FieldLabel>H:</FieldLabel><Field>2.126 in</Field>
              </Fields>
              <Fields>
                <FieldLabel>R:</FieldLabel><Field>0 °<FieldCaret $s={3} /></Field>
                <FieldLabel>S:</FieldLabel><Field>0 °<FieldCaret $s={3} /></Field>
              </Fields>
            </FieldsWrap>
            <Slot $ml={10}>
              <Ico w={6} h={60}>
                <g fill="none" stroke="#888" strokeWidth="1.2">
                  <rect x=".8" y="21" width="4.4" height="6.5" rx="2.2" />
                  <rect x=".8" y="27" width="4.4" height="6.5" rx="2.2" />
                </g>
              </Ico>
            </Slot>
          </TransformBody>
        </Inspector>

        <StatusBar>
          <Slot $ml={12}><Tri w={10} h={10} d="M0 0H1V10H0ZM10 0V10L2 5Z" c="#777" /></Slot>
          <Slot $ml={10}><Tri w={8} h={10} d="M8 0V10L0 5Z" c="#777" /></Slot>
          <PageCount>1 of 1</PageCount>
          <Slot $ml={37}><Tri w={9} h={10} d="M0 0L9 5L0 10Z" c="#eee" /></Slot>
          <Slot $ml={8}><Tri w={10} h={10} d="M0 0L8 5L0 10ZM9 0H10V10H9Z" c="#777" /></Slot>
          <Slot $ml={9}>
            <Ico w={12} h={14}>
              <rect x="2.5" y="1.5" width="9" height="12" fill="none" stroke="#999" />
              <rect x=".5" y=".5" width="9" height="12" fill="#333" stroke="#ddd" />
              <path d="M2 3H8M2 5H8M2 7H8M2 9H8" stroke="#ddd" />
            </Ico>
          </Slot>
          <Slot $ml={14}>
            <Ico w={12} h={12}><path d="M2 10V4Q2 0 6 0Q10 0 10 4V10Z" fill="#38a866" /><rect y="10" width="12" height="2" fill="#777" /></Ico>
          </Slot>
          <Hint>'1.10.8' selected. <b>Drag</b> to move selection. <b>Click</b> another object to select it. <b>Click</b> on an empty area to deselect selection.</Hint>
        </StatusBar>
      </Window>
    </>
  );
}
